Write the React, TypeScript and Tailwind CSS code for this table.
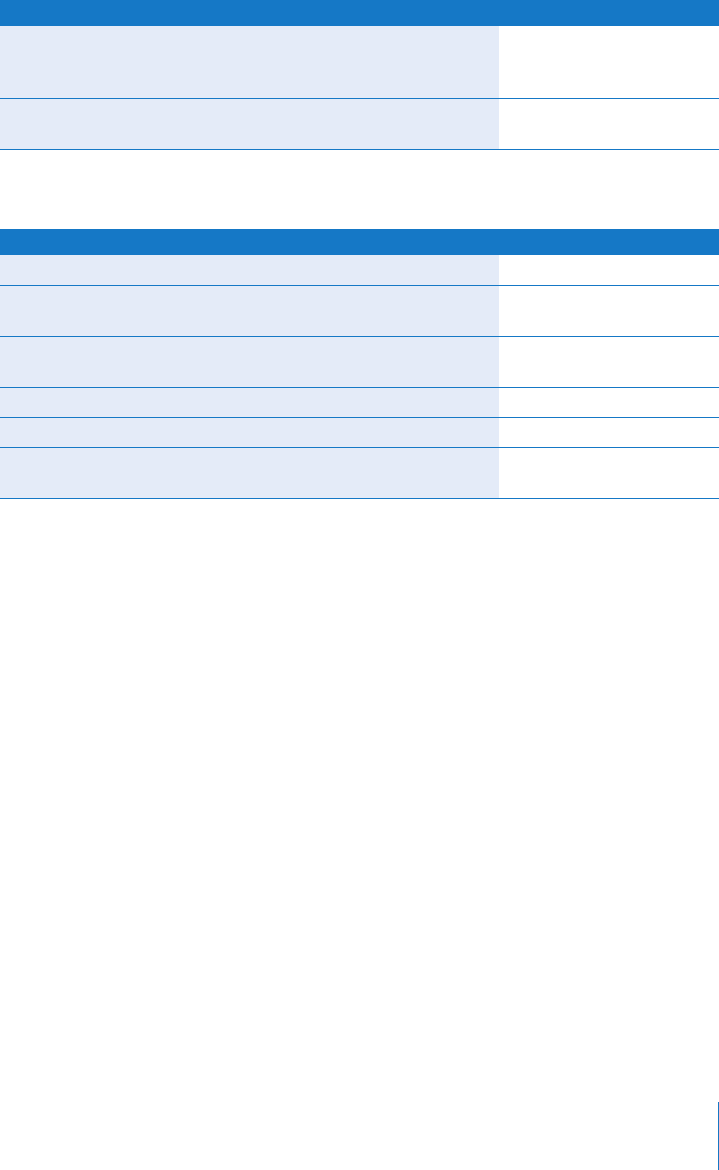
const rowsA = [72, 50];
const rowsB = [30, 50, 50, 29, 29, 50];

function Table({ rows }: { rows: number[] }) {
  return (
    <div className="flex flex-col">
      <div className="h-[26px] bg-[#1578c6]" />
      {rows.map((h, i) => (
        <div key={i} className="grid grid-cols-[499px_1fr] border-b border-[#1578c6]">
          <div className="bg-[#e4ebf8]" style={{ height: h }} />
          <div className="bg-white" />
        </div>
      ))}
    </div>
  );
}

export default function App() {
  return (
    <div className="w-[719px] h-[1170px] bg-white flex flex-col font-['Liberation_Sans',sans-serif]">
      <Table rows={rowsA} />
      <div className="h-[79px]" />
      <Table rows={rowsB} />
      <div className="mt-[603px] flex justify-end">
        <div className="w-px h-[68px] bg-[#1578c6]" />
      </div>
    </div>
  );
}
